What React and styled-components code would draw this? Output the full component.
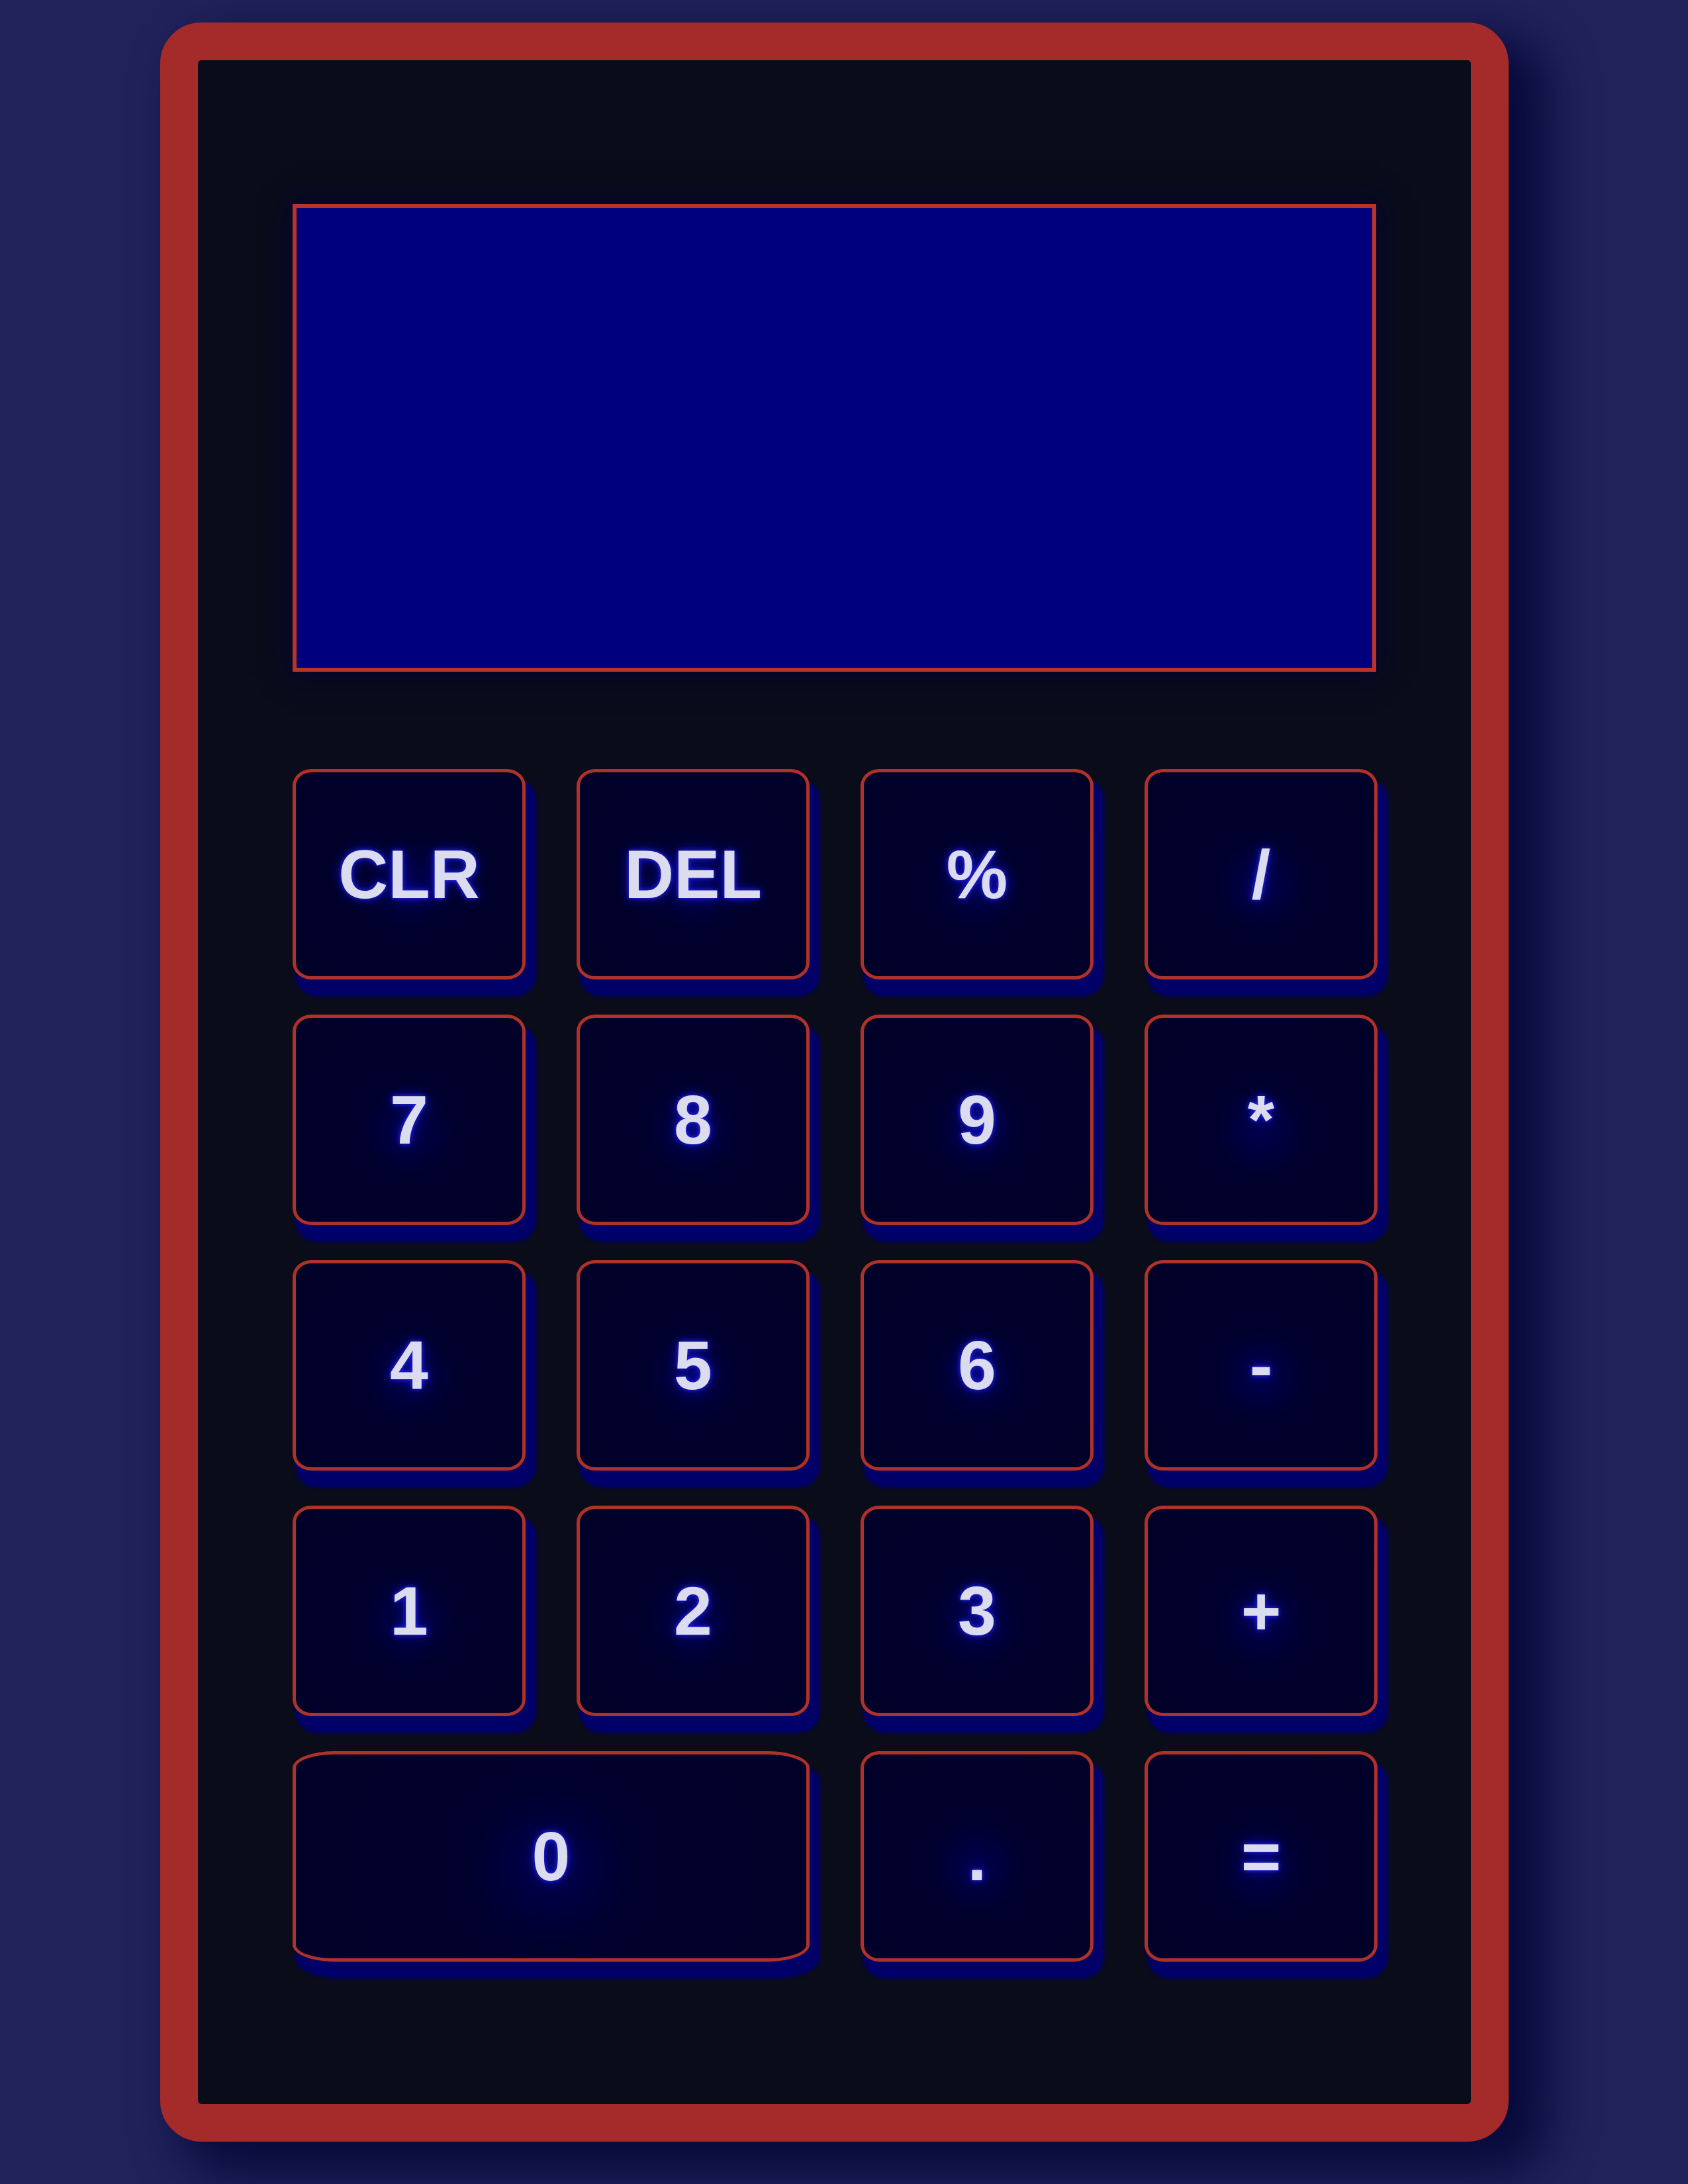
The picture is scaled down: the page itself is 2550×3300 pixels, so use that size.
import styled, { createGlobalStyle } from 'styled-components';

const GlobalStyle = createGlobalStyle`
  html, body {
    margin: 0;
    padding: 0;
    background: #21225a;
  }
  #root {
    min-height: 3300px;
  }
`;

const Page = styled.div`
  min-height: 3300px;
  padding: 34px 0 0 242px;
  box-sizing: border-box;
  background: #21225a;
`;

const Calculator = styled.div`
  width: 2037px;
  box-sizing: border-box;
  border: 57px solid #a52a2a;
  border-radius: 62px;
  background: #0a0c1a;
  padding: 217px 143px 215px;
  display: flex;
  flex-direction: column;
  gap: 147px;
  box-shadow: 45px 35px 70px 14px #080a3c;
`;

const Screen = styled.div`
  height: 707px;
  box-sizing: border-box;
  background: #00007d;
  border: 6px solid #bb3228;
  box-shadow: 0 0 40px 6px #05052e;
`;

const Keypad = styled.div`
  display: grid;
  grid-template-columns: repeat(4, 352px);
  grid-auto-rows: 318px;
  column-gap: 77px;
  row-gap: 53px;
`;

const Key = styled.button`
  grid-column: span ${(p) => p.$span || 1};
  box-sizing: border-box;
  border: 5px solid #b0302a;
  border-radius: 8%;
  background: radial-gradient(circle at 50% 55%, #000050 0%, #00002c 30%, #000028 100%);
  box-shadow: 10px 20px 4px 6px #000068;
  color: #dcdcef;
  font-family: 'Liberation Sans', Arial, sans-serif;
  font-weight: 700;
  font-size: 104px;
  line-height: 1;
  padding: 0;
  display: flex;
  align-items: center;
  justify-content: center;
  text-shadow: 0 0 6px #2a2aff, 0 0 18px #1010c0;
  cursor: pointer;
`;

const keys = [
  ['CLR'], ['DEL'], ['%'], ['/'],
  ['7'], ['8'], ['9'], ['*'],
  ['4'], ['5'], ['6'], ['-'],
  ['1'], ['2'], ['3'], ['+'],
  ['0', 2], ['.'], ['='],
];

export default function App() {
  return (
    <Page>
      <GlobalStyle />
      <Calculator>
        <Screen />
        <Keypad>
          {keys.map(([label, span]) => (
            <Key key={label} $span={span}>
              {label}
            </Key>
          ))}
        </Keypad>
      </Calculator>
    </Page>
  );
}
